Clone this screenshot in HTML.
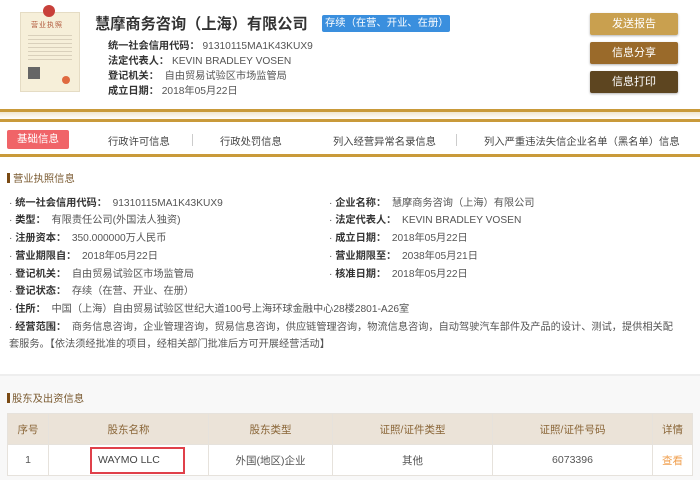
<!DOCTYPE html>
<html><head><meta charset="utf-8"><style>
*{margin:0;padding:0;box-sizing:border-box}
body{width:700px;height:480px;overflow:hidden;background:#fff;font-family:"Liberation Sans","Noto Sans CJK SC",sans-serif;color:#555;font-size:10px;position:relative}
.a{position:absolute;white-space:nowrap}
.btn{position:absolute;left:590px;width:88px;height:22px;color:#fff;font-size:11px;text-align:center;line-height:22px;border-radius:2px;box-shadow:0 1px 2px rgba(0,0,0,.3)}
.row{position:absolute;left:9px;font-size:10.2px;color:#555;white-space:nowrap}
.row b{color:#333}
.nav{position:absolute;top:133px;font-size:10.3px;color:#444;white-space:nowrap}
table{position:absolute;left:7px;top:413px;width:685px;border-collapse:collapse;font-size:10.5px;table-layout:fixed}
td,th{border:1px solid #e6e2dc;text-align:center;white-space:nowrap}
th{background:#ebe3d8;color:#8a6638;font-weight:normal;height:31px}
td{background:#fff;height:31px;color:#555}
</style></head><body>
<div class="a" style="left:20px;top:12px;width:60px;height:80px;background:#f6efd9;border:1px solid #e5dcc4"></div>
<div class="a" style="left:43px;top:5px;width:12px;height:12px;border-radius:50%;background:#c8403a"></div>
<div class="a" style="left:31px;top:20px;font-size:7px;color:#b0573a;letter-spacing:1px">营业执照</div>
<div class="a" style="left:28px;top:32px;width:44px;height:30px;background:repeating-linear-gradient(#f6efd9 0 3px,#d9d0bb 3px 4px)"></div>
<div class="a" style="left:28px;top:67px;width:12px;height:12px;background:#666"></div>
<div class="a" style="left:62px;top:76px;width:8px;height:8px;border-radius:50%;background:#e06a40"></div>

<div class="a" style="left:95px;top:12px;font-size:15.2px;font-weight:bold;color:#333">慧摩商务咨询（上海）有限公司</div>
<div class="a" style="left:322px;top:15px;width:128px;height:17px;background:#3a8fde;color:#fff;font-size:10.3px;line-height:17px;padding-left:3px;border-radius:2px">存续（在营、开业、在册）</div>
<div class="a" style="left:108px;top:37px;font-size:10.2px"><b style="color:#333">统一社会信用代码：</b> 91310115MA1K43KUX9</div>
<div class="a" style="left:108px;top:52px;font-size:10.2px"><b style="color:#333">法定代表人：</b> KEVIN BRADLEY VOSEN</div>
<div class="a" style="left:108px;top:67px;font-size:10.2px"><b style="color:#333">登记机关：</b> &nbsp;自由贸易试验区市场监管局</div>
<div class="a" style="left:108px;top:82px;font-size:10.2px"><b style="color:#333">成立日期：</b> 2018年05月22日</div>

<div class="btn" style="top:13px;background:#c9a04f">发送报告</div>
<div class="btn" style="top:42px;background:#9a6a2a">信息分享</div>
<div class="btn" style="top:71px;background:#5d4520">信息打印</div>

<div class="a" style="left:0;top:109px;width:700px;height:3px;background:#c99a3a"></div>
<div class="a" style="left:0;top:112px;width:700px;height:7px;background:linear-gradient(#f0e6d0,#fff)"></div>
<div class="a" style="left:0;top:119px;width:700px;height:3px;background:#c99a3a"></div>
<div class="a" style="left:7px;top:130px;width:62px;height:19px;background:#f06468;color:#fff;font-size:10.5px;text-align:center;line-height:19px;border-radius:2px">基础信息</div>
<div class="nav" style="left:108px">行政许可信息</div>
<div class="a" style="left:192px;top:134px;width:1px;height:12px;background:#ccc"></div>
<div class="nav" style="left:220px">行政处罚信息</div>
<div class="nav" style="left:333px">列入经营异常名录信息</div>
<div class="a" style="left:456px;top:134px;width:1px;height:12px;background:#ccc"></div>
<div class="nav" style="left:484px">列入严重违法失信企业名单（黑名单）信息</div>
<div class="a" style="left:0;top:154px;width:700px;height:3px;background:#c99a3a"></div>

<div class="a" style="left:7px;top:173px;width:3px;height:10px;background:#7a4a14"></div>
<div class="a" style="left:13px;top:170px;font-size:10.3px;color:#7a5a30">营业执照信息</div>
<div class="row" style="top:194px">· <b>统一社会信用代码：</b> &nbsp;91310115MA1K43KUX9</div>
<div class="row" style="top:211px">· <b>类型：</b> &nbsp;有限责任公司(外国法人独资)</div>
<div class="row" style="top:229px">· <b>注册资本：</b> &nbsp;350.000000万人民币</div>
<div class="row" style="top:247px">· <b>营业期限自：</b> &nbsp;2018年05月22日</div>
<div class="row" style="top:265px">· <b>登记机关：</b> &nbsp;自由贸易试验区市场监管局</div>
<div class="row" style="top:282px">· <b>登记状态：</b> &nbsp;存续（在营、开业、在册）</div>
<div class="row" style="top:300px">· <b>住所：</b> &nbsp;中国（上海）自由贸易试验区世纪大道100号上海环球金融中心28楼2801-A26室</div>
<div class="row" style="top:318px">· <b>经营范围：</b> &nbsp;商务信息咨询，企业管理咨询，贸易信息咨询，供应链管理咨询，物流信息咨询，自动驾驶汽车部件及产品的设计、测试，提供相关配</div>
<div class="row" style="top:335px">套服务。【依法须经批准的项目，经相关部门批准后方可开展经营活动】</div>
<div class="row" style="top:194px;left:329px">· <b>企业名称：</b> &nbsp;慧摩商务咨询（上海）有限公司</div>
<div class="row" style="top:211px;left:329px">· <b>法定代表人：</b> &nbsp;KEVIN BRADLEY VOSEN</div>
<div class="row" style="top:229px;left:329px">· <b>成立日期：</b> &nbsp;2018年05月22日</div>
<div class="row" style="top:247px;left:329px">· <b>营业期限至：</b> &nbsp;2038年05月21日</div>
<div class="row" style="top:265px;left:329px">· <b>核准日期：</b> &nbsp;2018年05月22日</div>

<div class="a" style="left:0;top:374px;width:700px;height:106px;background:#f8f8f8;border-top:2px solid #eee"></div>
<div class="a" style="left:7px;top:393px;width:3px;height:10px;background:#7a4a14"></div>
<div class="a" style="left:12px;top:390px;font-size:10.3px;color:#7a5a30">股东及出资信息</div>
<table>
<colgroup><col style="width:41px"><col style="width:160px"><col style="width:124px"><col style="width:160px"><col style="width:160px"><col style="width:40px"></colgroup>
<tr><th>序号</th><th>股东名称</th><th>股东类型</th><th>证照/证件类型</th><th>证照/证件号码</th><th>详情</th></tr>
<tr><td>1</td><td style="text-align:left"><span style="display:inline-block;margin-left:41px;border:2px solid #e0404a;width:95px;height:27px;line-height:23px;padding-left:6px;color:#444">WAYMO LLC</span></td><td>外国(地区)企业</td><td>其他</td><td>6073396</td><td style="color:#f0a050">查看</td></tr>
</table>
</body></html>
